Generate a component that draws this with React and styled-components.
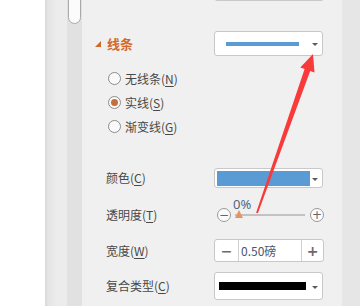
import React from "react";
import styled, { createGlobalStyle } from "styled-components";

const Global = createGlobalStyle`
  html, body { margin: 0; padding: 0; background: #ffffff; }
  body { font-family: "Noto Sans CJK SC", "Noto Sans", sans-serif; }
`;

const Page = styled.div`
  position: relative;
  display: flex;
  width: 360px;
  height: 306px;
  overflow: hidden;
`;

const Gutter = styled.div`
  width: 45px;
  background: #ffffff;
`;

const Shade = styled.div`
  width: 22px;
  background: linear-gradient(to right, #d9d9d9 0px, #e4e4e4 3px, #ebebeb 10px, #ececec 22px);
`;

const Track = styled.div`
  width: 15px;
  background: #e1e1e1;
`;

const Thumb = styled.div`
  box-sizing: border-box;
  width: 13px;
  height: 34px;
  margin: -10px 0 0 1px;
  background: #fbfbfb;
  border: 1px solid #a9a9a9;
  border-radius: 0 0 7px 7px;
`;

const Panel = styled.div`
  width: 260px;
  background: #f0f0f0;
  display: flex;
  flex-direction: column;
`;

const Strip = styled.div`
  flex: 1;
  background: #e6e6e6;
`;

const PrevEdge = styled.div`
  box-sizing: border-box;
  margin-left: 133px;
  width: 108px;
  height: 2px;
  margin-top: -1px;
  border: 1px solid #c9c9c9;
  border-top: none;
  border-radius: 0 0 3px 3px;
`;

const Row = styled.div`
  display: grid;
  grid-template-columns: 132px 110px;
  align-items: center;
  height: ${(p) => p.$h}px;
  margin-top: ${(p) => p.$mt || 0}px;
`;

const Label = styled.div`
  padding-left: ${(p) => p.$indent}px;
  font-size: 12px;
  color: #484848;
  white-space: nowrap;
  line-height: 16px;
  u { text-decoration-thickness: 1px; text-underline-offset: 2px; }
`;

const Header = styled.div`
  display: flex;
  align-items: center;
  gap: 6px;
  padding-left: 13px;
  font-size: 13px;
  font-weight: 600;
  color: #d0692a;
  line-height: 16px;
`;

const RadioGroup = styled.div`
  margin-top: 10px;
`;

const RadioRow = styled.div`
  display: flex;
  align-items: center;
  gap: 4px;
  height: 24px;
  padding-left: 26px;
  font-size: 12px;
  color: #484848;
  u { text-decoration-thickness: 1px; text-underline-offset: 2px; }
`;

const RadioCircle = styled.span`
  box-sizing: border-box;
  width: 13px;
  height: 13px;
  border-radius: 50%;
  border: 1px solid #8c8c8c;
  background: #fafafa;
  display: flex;
  align-items: center;
  justify-content: center;
  &::after {
    content: "";
    width: 7px;
    height: 7px;
    border-radius: 50%;
    background: ${(p) => (p.$on ? "#c56d3c" : "transparent")};
  }
`;

const Dropdown = styled.div`
  box-sizing: border-box;
  width: 109px;
  height: ${(p) => p.$h}px;
  background: #ffffff;
  border: 1px solid #c8c8c8;
  border-radius: 3px;
  display: flex;
  align-items: center;
  padding-left: ${(p) => p.$pl}px;
`;

const Swatch = styled.span`
  display: block;
  width: ${(p) => p.$w}px;
  height: ${(p) => p.$h}px;
  background: ${(p) => p.$c};
`;

const Caret = styled.span`
  margin-left: auto;
  margin-right: 4px;
  width: 0;
  height: 0;
  border-left: 3px solid transparent;
  border-right: 3px solid transparent;
  border-top: 3px solid #5a5a5a;
  margin-top: 2px;
`;

const Slider = styled.div`
  display: flex;
  align-items: center;
  height: 20px;
  padding-left: 3px;
`;

const RoundBtn = styled.span`
  box-sizing: border-box;
  width: 14px;
  height: 14px;
  border-radius: 50%;
  border: 1px solid #9a9a9a;
  background: #fbfbfb;
  color: #666;
  font-family: "DejaVu Sans", sans-serif;
  font-size: 12px;
  line-height: 12px;
  display: flex;
  align-items: center;
  justify-content: center;
`;

const Rail = styled.div`
  position: relative;
  flex: 0 0 70px;
  margin: 0 5px 0 4px;
  height: 2px;
  background: #c2c2c2;
`;

const SliderThumb = styled.span`
  position: absolute;
  left: 0;
  top: -4px;
  width: 0;
  height: 0;
  border-left: 4px solid transparent;
  border-right: 4px solid transparent;
  border-bottom: 8px solid #e39460;
`;

const Pct = styled.span`
  position: absolute;
  left: -2px;
  top: -17px;
  font-size: 13px;
  line-height: 15px;
  color: #56627c;
  font-family: "Noto Sans", sans-serif;
`;

const Spinner = styled.div`
  box-sizing: border-box;
  width: 110px;
  height: 23px;
  background: #ffffff;
  border: 1px solid #c8c8c8;
  border-radius: 3px;
  display: flex;
`;

const SpinBtn = styled.span`
  width: ${(p) => p.$w}px;
  display: flex;
  align-items: center;
  justify-content: center;
  color: #6a6a6a;
  font-family: "DejaVu Sans", sans-serif;
  font-weight: bold;
  font-size: 14px;
  border-left: ${(p) => (p.$side === "right" ? "1px solid #d0d0d0" : "none")};
  border-right: ${(p) => (p.$side === "left" ? "1px solid #d0d0d0" : "none")};
`;

const SpinValue = styled.span`
  flex: 1;
  display: flex;
  align-items: center;
  padding-left: 2px;
  font-size: 12px;
  color: #4a5570;
`;

const ArrowOverlay = styled.svg`
  position: absolute;
  left: 0;
  top: 0;
  pointer-events: none;
`;

export default function App() {
  return (
    <Page>
      <Global />
      <Gutter />
      <Shade />
      <Track>
        <Thumb />
      </Track>
      <Panel>
        <PrevEdge />
        <Row $h={25} $mt={30}>
          <Header>
            <svg width="6" height="6" viewBox="0 0 6 6">
              <polygon points="6,0 6,6 0,6" fill="#d0692a" />
            </svg>
            线条
          </Header>
          <Dropdown $h={25} $pl={11}>
            <Swatch $w={73} $h={4} $c="#5b9bd5" />
            <Caret />
          </Dropdown>
        </Row>
        <RadioGroup>
          <RadioRow>
            <RadioCircle />
            <span>无线条(<u>N</u>)</span>
          </RadioRow>
          <RadioRow>
            <RadioCircle $on />
            <span>实线(<u>S</u>)</span>
          </RadioRow>
          <RadioRow>
            <RadioCircle />
            <span>渐变线(<u>G</u>)</span>
          </RadioRow>
        </RadioGroup>
        <Row $h={20} $mt={30}>
          <Label $indent={24}>颜色(<u>C</u>)</Label>
          <Dropdown $h={20} $pl={2}>
            <Swatch $w={93} $h={15} $c="#5b9bd5" />
            <Caret />
          </Dropdown>
        </Row>
        <Row $h={20} $mt={17}>
          <Label $indent={24}>透明度(<u>T</u>)</Label>
          <Slider>
            <RoundBtn>−</RoundBtn>
            <Rail>
              <Pct>0%</Pct>
              <SliderThumb />
            </Rail>
            <RoundBtn>+</RoundBtn>
          </Slider>
        </Row>
        <Row $h={23} $mt={14}>
          <Label $indent={24}>宽度(<u>W</u>)</Label>
          <Spinner>
            <SpinBtn $w={23} $side="left">−</SpinBtn>
            <SpinValue>0.50磅</SpinValue>
            <SpinBtn $w={21} $side="right">+</SpinBtn>
          </Spinner>
        </Row>
        <Row $h={28} $mt={10}>
          <Label $indent={24}>复合类型(<u>C</u>)</Label>
          <Dropdown $h={28} $pl={4}>
            <Swatch $w={87} $h={8} $c="#000000" />
            <Caret />
          </Dropdown>
        </Row>
      </Panel>
      <Strip />
      <ArrowOverlay width="360" height="306" viewBox="0 0 360 306">
        <polygon
          points="313,54 314.5,72.5 310.2,71 257.9,213.3 256.1,212.7 304.6,69 300.3,67.5"
          fill="#f83a3a"
        />
      </ArrowOverlay>
    </Page>
  );
}
